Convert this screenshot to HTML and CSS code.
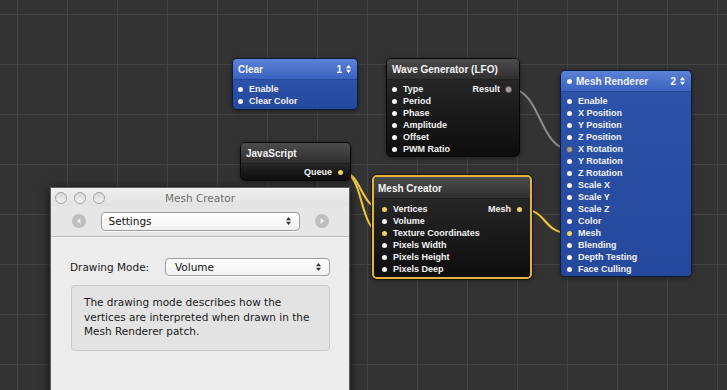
FILE: index.html
```html
<!DOCTYPE html>
<html lang="en">
<head>
  <meta charset="UTF-8" />
  <meta name="viewport" content="width=device-width, initial-scale=1.0" />
  <title>Composition Editor</title>
  <link rel="stylesheet" href="styles.css">
</head>
<body>
  <div class="canvas">
    <!-- connections -->
    <svg class="wires" width="727" height="390" viewBox="0 0 727 390">
      <g class="wire-gray">
        <path d="M511 89 C540 89 540 149 569 149" />
      </g>
      <g class="wire-yellow">
        <path class="edge" d="M342 172 C362 172 360 209 383 209" />
        <path class="edge" d="M342 172 C365 172 358 233 383 233" />
        <path class="edge" d="M521 209 C548 209 542 233 569 233" />
        <path d="M342 172 C362 172 360 209 383 209" />
        <path d="M342 172 C365 172 358 233 383 233" />
        <path d="M521 209 C548 209 542 233 569 233" />
      </g>
    </svg>

    <!-- patches -->
    <div class="patch blue p-clear">
      <div class="patch-head">
        <span class="patch-title">Clear</span>
        <span class="patch-count">1 <svg class="updown" width="5" height="8" viewBox="0 0 5 8"><path d="M0 3.3 L2.5 0 L5 3.3 Z M0 4.7 L2.5 8 L5 4.7 Z" /></svg></span>
      </div>
      <div class="patch-body">
        <div class="inputs">
          <div class="port"><i class="dot"></i>Enable</div>
          <div class="port"><i class="dot"></i>Clear Color</div>
        </div>
      </div>
    </div>

    <div class="patch p-wave">
      <div class="patch-head"><span class="patch-title">Wave Generator (LFO)</span></div>
      <div class="patch-body">
        <div class="inputs">
          <div class="port"><i class="dot"></i>Type</div>
          <div class="port"><i class="dot"></i>Period</div>
          <div class="port"><i class="dot"></i>Phase</div>
          <div class="port"><i class="dot"></i>Amplitude</div>
          <div class="port"><i class="dot"></i>Offset</div>
          <div class="port"><i class="dot"></i>PWM Ratio</div>
        </div>
        <div class="outputs">
          <div class="port">Result<i class="dot gray"></i></div>
        </div>
      </div>
    </div>

    <div class="patch p-js">
      <div class="patch-head"><span class="patch-title">JavaScript</span></div>
      <div class="patch-body">
        <div class="outputs">
          <div class="port">Queue<i class="dot yellow"></i></div>
        </div>
      </div>
    </div>

    <div class="patch selected p-creator">
      <div class="patch-head"><span class="patch-title">Mesh Creator</span></div>
      <div class="patch-body">
        <div class="inputs">
          <div class="port"><i class="dot yellow"></i>Vertices</div>
          <div class="port"><i class="dot"></i>Volume</div>
          <div class="port"><i class="dot yellow"></i>Texture Coordinates</div>
          <div class="port"><i class="dot"></i>Pixels Width</div>
          <div class="port"><i class="dot"></i>Pixels Height</div>
          <div class="port"><i class="dot"></i>Pixels Deep</div>
        </div>
        <div class="outputs">
          <div class="port">Mesh<i class="dot yellow"></i></div>
        </div>
      </div>
    </div>

    <div class="patch blue p-renderer">
      <div class="patch-head">
        <span class="patch-title"><i class="dot"></i>Mesh Renderer</span>
        <span class="patch-count">2 <svg class="updown" width="5" height="8" viewBox="0 0 5 8"><path d="M0 3.3 L2.5 0 L5 3.3 Z M0 4.7 L2.5 8 L5 4.7 Z" /></svg></span>
      </div>
      <div class="patch-body">
        <div class="inputs">
          <div class="port"><i class="dot"></i>Enable</div>
          <div class="port"><i class="dot"></i>X Position</div>
          <div class="port"><i class="dot"></i>Y Position</div>
          <div class="port"><i class="dot"></i>Z Position</div>
          <div class="port"><i class="dot gray"></i>X Rotation</div>
          <div class="port"><i class="dot"></i>Y Rotation</div>
          <div class="port"><i class="dot"></i>Z Rotation</div>
          <div class="port"><i class="dot"></i>Scale X</div>
          <div class="port"><i class="dot"></i>Scale Y</div>
          <div class="port"><i class="dot"></i>Scale Z</div>
          <div class="port"><i class="dot"></i>Color</div>
          <div class="port"><i class="dot yellow"></i>Mesh</div>
          <div class="port"><i class="dot"></i>Blending</div>
          <div class="port"><i class="dot"></i>Depth Testing</div>
          <div class="port"><i class="dot"></i>Face Culling</div>
        </div>
      </div>
    </div>

    <!-- inspector window -->
    <div class="window">
      <div class="titlebar">
        <div class="lights"><i></i><i></i><i></i></div>
        <div class="win-title">Mesh Creator</div>
        <div></div>
      </div>
      <div class="toolbar">
        <span class="nav-btn"><svg width="14" height="14" viewBox="0 0 14 14"><path d="M4.5 7 L8.5 4.2 L8.5 9.8 Z" /></svg></span>
        <div class="popup popup-wide">
          <span>Settings</span>
          <svg class="updown" width="5" height="8" viewBox="0 0 5 8"><path d="M0 3.3 L2.5 0 L5 3.3 Z M0 4.7 L2.5 8 L5 4.7 Z" /></svg>
        </div>
        <span class="nav-btn"><svg width="14" height="14" viewBox="0 0 14 14"><path d="M9.5 7 L5.5 4.2 L5.5 9.8 Z" /></svg></span>
      </div>
      <div class="settings">
        <div class="field">
          <label>Drawing Mode:</label>
          <div class="popup popup-mode">
            <span>Volume</span>
            <svg class="updown" width="5" height="8" viewBox="0 0 5 8"><path d="M0 3.3 L2.5 0 L5 3.3 Z M0 4.7 L2.5 8 L5 4.7 Z" /></svg>
          </div>
        </div>
        <div class="info">The drawing mode describes how the vertices are interpreted when drawn in the Mesh Renderer patch.</div>
      </div>
    </div>
  </div>
</body>
</html>
```

FILE: styles.css
```css
* { margin: 0; padding: 0; box-sizing: border-box; }
html, body { width: 100%; height: 100%; overflow: hidden; background: #333; }

/* editor canvas */
.canvas {
  position: relative;
  width: 727px; height: 390px;
  overflow: hidden;
  background-color: #333;
  background-image:
    linear-gradient(to right, #434343 1px, transparent 1px),
    linear-gradient(to bottom, #434343 1px, transparent 1px);
  background-size: 50px 50px;
  background-position: 17px 14px;
}

.wires { position: absolute; top: 0; left: 0; }
.wires path { fill: none; }
.wire-gray path { stroke: #8c8c8c; stroke-width: 2; }
.wire-yellow path { stroke: #ebc94f; stroke-width: 2; }
.wire-yellow path.edge { stroke: #4a3d12; stroke-width: 3.5; }

/* patches */
.patch {
  position: absolute;
  border: 1px solid #070707;
  border-radius: 5px;
  overflow: hidden;
  font: bold 9px "Liberation Sans", Arial, sans-serif;
  color: #f3f3f3;
  box-shadow: 0 1px 4px rgba(0,0,0,0.45);
}
.patch-head {
  height: 21px;
  display: flex; align-items: center; justify-content: space-between;
  padding: 0 6px 0 5px;
  font-size: 10px;
  background: linear-gradient(#4c4c4c, #2f2f2f);
  border-bottom: 1px solid #202020;
}
.patch-title { display: flex; align-items: center; gap: 4px; }
.patch-count { display: flex; align-items: center; gap: 4px; }
.updown path { fill: #fff; }
.patch-body {
  display: flex; justify-content: space-between;
  padding: 2px 0 1px;
  background: linear-gradient(#262626, #0d0d0d);
}
.inputs, .outputs { display: flex; flex-direction: column; }
.port {
  height: 12px;
  display: flex; align-items: center; gap: 6px;
  padding-left: 5px;
  white-space: nowrap;
}
.outputs .port { padding: 0 7px 0 0; justify-content: flex-end; }

.dot {
  display: block;
  width: 5px; height: 5px;
  border-radius: 50%;
  background: #f6f6f6;
}
.dot.yellow { background: #f1d164; }
.dot.gray { background: #a3a3a3; box-shadow: 0 0 0 1px #5a5a5a; }

.blue { border-color: #0c1b3f; }
.blue .patch-head { background: linear-gradient(#5c82d6, #3a63bf); border-bottom-color: #25479a; }
.blue .patch-body { background: linear-gradient(#2c53a9, #24489c); }

.selected {
  border: 2px solid #e3b53f;
  box-shadow: 0 0 0 1px #1a1405, 0 1px 4px rgba(0,0,0,0.5);
}
.selected .patch-head { height: 22px; padding: 2px 0 0 4px; }
.selected .patch-body { padding: 4px 0 2px; }
.selected .inputs .port { padding-left: 8px; }
.selected .outputs .port { padding-right: 8px; }

.p-clear { left: 232px; top: 58px; width: 126px; }
.p-clear .patch-body { padding: 3px 0 2px; }
.p-wave { left: 386px; top: 58px; width: 134px; }
.p-wave .patch-body { padding-top: 3px; }
.p-wave .outputs .port { padding-right: 8px; }
.p-js { left: 240px; top: 142px; width: 111px; }
.p-js .patch-body { justify-content: flex-end; padding: 2px 0 2px; }
.p-creator { left: 372px; top: 175px; width: 160px; }
.p-renderer { left: 560px; top: 70px; width: 132px; }
.p-renderer .patch-body { padding-top: 3px; }
.p-renderer .inputs .port { padding-left: 6px; }
.p-renderer .patch-title { padding-left: 1px; }

/* inspector window */
.window {
  position: absolute;
  left: 50px; top: 187px;
  width: 300px; height: 215px;
  background: #ececec;
  border: 1px solid #5e5e5e;
  box-shadow: 0 2px 10px rgba(0,0,0,0.7);
  font-family: "DejaVu Sans", "Liberation Sans", sans-serif;
  font-size: 10.5px;
  color: #1a1a1a;
}
.titlebar {
  height: 18px;
  display: grid; grid-template-columns: 1fr auto 1fr; align-items: center;
  background: linear-gradient(#efefef, #e2e2e2);
  padding-top: 1px;
}
.lights { display: flex; gap: 7px; padding-left: 4px; }
.lights i {
  display: block;
  width: 12px; height: 12px;
  border-radius: 50%;
  border: 1px solid #a4a4a4;
  background: linear-gradient(#d6d6d6, #f4f4f4);
}
.win-title { color: #707070; }

.toolbar {
  height: 31px;
  display: flex; align-items: center; justify-content: center; gap: 15px;
  background: #e6e6e6;
  border-bottom: 1px solid #b9b9b9;
  box-shadow: 0 1px 0 #f7f7f7;
}
.nav-btn {
  width: 14px; height: 14px;
  border-radius: 50%;
  background: #bfbfbf;
  display: flex;
}
.nav-btn path { fill: #f0f0f0; }

.popup {
  display: flex; align-items: center; justify-content: space-between;
  background: linear-gradient(#ffffff, #f1f1f1);
  border: 1px solid #9c9c9c;
  border-radius: 4px;
  box-shadow: 0 1px 0 rgba(255,255,255,0.7);
  color: #111;
}
.popup .updown path { fill: #333; }
.popup-wide { width: 199px; height: 19px; padding: 0 8px 0 7px; }
.popup-mode { width: 165px; height: 18px; padding: 0 8px 0 9px; }

.settings { padding: 21px 0 0 19px; }
.field { display: flex; align-items: center; }
.field label { width: 95px; }
.info {
  width: 259px; height: 66px;
  margin: 9px 0 0 1px;
  padding: 9px 10px 0 12px;
  background: #e3e3e3;
  border: 1px solid #c9c9c9;
  border-radius: 4px;
  line-height: 14.5px;
}
```
